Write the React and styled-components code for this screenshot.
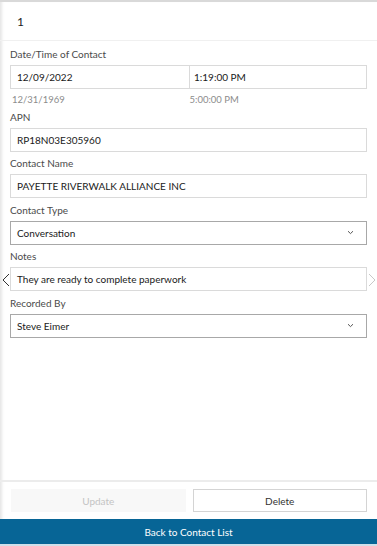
import React from 'react'
import styled, { createGlobalStyle } from 'styled-components'

const Global = createGlobalStyle`
  html, body { margin: 0; padding: 0; background: #fff; }
  body { font-family: Lato, "Open Sans", sans-serif; }
  * { box-sizing: border-box; }
`

const Page = styled.div`
  height: 546px;
  display: flex;
  flex-direction: column;
  border-top: 2px solid #d9d9d9;
  box-shadow: inset 4px 0 3px -2px rgba(0, 0, 0, 0.1);
`

const Header = styled.div`
  height: 39px;
  display: flex;
  align-items: center;
  padding-left: 17px;
  font-size: 12px;
  color: #222;
  border-bottom: 1px solid #f0f0f0;
`

const Form = styled.div`
  flex: 1;
  padding: 6px 10px 0 10px;
  display: flex;
  flex-direction: column;
`

const Field = styled.div`
  position: relative;
  display: flex;
  flex-direction: column;
  margin-bottom: 4.5px;
`

const Label = styled.div`
  font-size: 10px;
  color: #4a4a4a;
  height: 14px;
  line-height: 14px;
  margin-bottom: 4px;
`

const Row = styled.div`
  display: flex;
`

const Input = styled.div`
  flex: 1;
  height: 24px;
  border: 1px solid ${p => (p.$dark ? '#a8a8a8' : '#dadada')};
  display: flex;
  align-items: center;
  justify-content: space-between;
  padding: 0 12px 0 6px;
  font-size: 10px;
  color: #1a1a1a;
  & + & {
    border-left: none;
    padding-left: 4px;
  }
`

const Hints = styled.div`
  display: flex;
  font-size: 9.5px;
  line-height: 11px;
  color: #8c8c8c;
  padding-top: 5px;
  padding-left: 2px;
`

const Hint = styled.div`
  flex: 1;
`

const Pager = styled.span`
  position: absolute;
  top: 24px;
  ${p => (p.$side === 'left' ? 'left: -8px;' : 'right: -9px;')}
  color: ${p => (p.$side === 'left' ? '#333' : '#c8c8c8')};
  display: flex;
`

const Footer = styled.div`
  border-top: 2px solid #ececec;
  padding: 7px 10px 7px 11px;
  display: flex;
  gap: 7px;
`

const Button = styled.div`
  flex: 1;
  height: 23px;
  display: flex;
  align-items: center;
  justify-content: center;
  font-size: 10px;
  color: ${p => (p.$disabled ? '#c4c4c4' : '#333')};
  background: ${p => (p.$disabled ? '#f8f8f8' : '#fff')};
  border: 1px solid ${p => (p.$disabled ? '#f8f8f8' : '#d4d4d4')};
`

const BackBar = styled.div`
  height: 27px;
  background: #076596;
  border-bottom: 2px solid #cfe0ea;
  color: #fff;
  font-size: 10px;
  display: flex;
  align-items: center;
  justify-content: center;
`

const Chevron = () => (
  <svg width="7" height="5" viewBox="0 0 7 5">
    <path d="M1 1.2 L3.5 3.6 L6 1.2" fill="none" stroke="#555" strokeWidth="1" />
  </svg>
)

const Arrow = ({ left }) => (
  <svg width="8" height="14" viewBox="0 0 8 14">
    <path
      d={left ? 'M7 1 L1 7 L7 13' : 'M1 1 L7 7 L1 13'}
      fill="none"
      stroke="currentColor"
      strokeWidth="1"
    />
  </svg>
)

export default function App() {
  return (
    <Page>
      <Global />
      <Header>1</Header>
      <Form>
        <Field>
          <Label>Date/Time of Contact</Label>
          <Row>
            <Input>12/09/2022</Input>
            <Input>1:19:00 PM</Input>
          </Row>
          <Hints>
            <Hint>12/31/1969</Hint>
            <Hint>5:00:00 PM</Hint>
          </Hints>
        </Field>
        <Field>
          <Label>APN</Label>
          <Row><Input>RP18N03E305960</Input></Row>
        </Field>
        <Field>
          <Label>Contact Name</Label>
          <Row><Input>PAYETTE RIVERWALK ALLIANCE INC</Input></Row>
        </Field>
        <Field>
          <Label>Contact Type</Label>
          <Row><Input $dark>Conversation<Chevron /></Input></Row>
        </Field>
        <Field>
          <Label>Notes</Label>
          <Pager $side="left"><Arrow left /></Pager>
          <Row><Input>They are ready to complete paperwork</Input></Row>
          <Pager $side="right"><Arrow /></Pager>
        </Field>
        <Field>
          <Label>Recorded By</Label>
          <Row><Input $dark>Steve Eimer<Chevron /></Input></Row>
        </Field>
      </Form>
      <Footer>
        <Button $disabled>Update</Button>
        <Button>Delete</Button>
      </Footer>
      <BackBar>Back to Contact List</BackBar>
    </Page>
  )
}
